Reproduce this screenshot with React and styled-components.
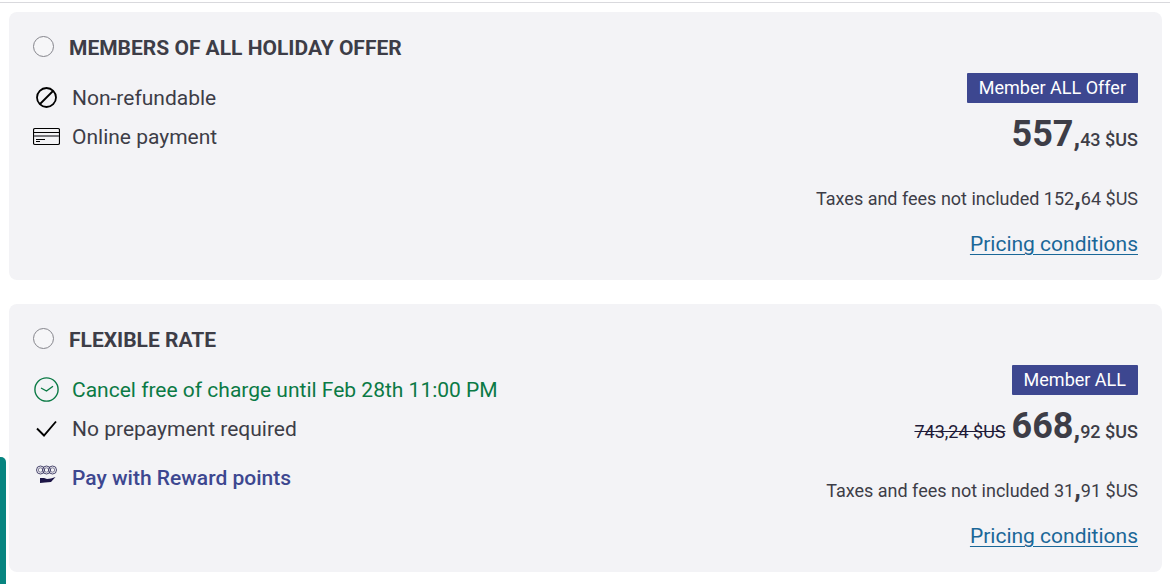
import React, {useState} from 'react'
import styled, {createGlobalStyle} from 'styled-components'


const offers = [
    {
        id: 'members',
        title: 'MEMBERS OF ALL HOLIDAY OFFER',
        features: [
            {icon: 'forbidden', text: 'Non-refundable'},
            {icon: 'card', text: 'Online payment'},
        ],
        badge: 'Member ALL Offer',
        price: ['557', '43'],
        taxes: ['152', '64'],
    },
    {
        id: 'flexible',
        title: 'FLEXIBLE RATE',
        features: [
            {icon: 'clock', text: 'Cancel free of charge until Feb 28th 11:00 PM', color: '#0b7a45'},
            {icon: 'check', text: 'No prepayment required'},
            {icon: 'reward', text: 'Pay with Reward points', color: '#3d4790', strong: true},
        ],
        badge: 'Member ALL',
        oldPrice: '743,24 $US',
        price: ['668', '92'],
        taxes: ['31', '91'],
    },
];

const icons = {
    forbidden: (
        <g fill="none" stroke="#000" strokeWidth="1.8">
            <circle cx="13.5" cy="13.5" r="9.5"/>
            <path d="M7 20L20 7"/>
        </g>
    ),
    card: (
        <g fill="none" stroke="#000">
            <rect x="0.5" y="5.5" width="26" height="16" rx="1.5" strokeWidth="1.2"/>
            <path d="M1 9.5H26"/>
            <path d="M1 13H26" stroke="#77777c" strokeWidth="2"/>
            <path d="M3 16.5H12M3 18.5H7"/>
        </g>
    ),
    clock: (
        <g fill="none" stroke="#0b7a45" strokeWidth="1.4">
            <circle cx="13.5" cy="13.5" r="11.6"/>
            <path d="M8 12L13.5 15L20 10.3"/>
        </g>
    ),
    check: <path d="M4 13.5L11 20.5L23 6.5" fill="none" stroke="#000" strokeWidth="1.9"/>,
    reward: (
        <g fill="none" stroke="#37335f" strokeWidth="0.9">
            <circle cx="7.5" cy="6" r="4"/>
            <circle cx="13.5" cy="6" r="4"/>
            <circle cx="19.5" cy="6" r="4"/>
            <circle cx="7.5" cy="6" r="2.2" strokeWidth="0.6"/>
            <circle cx="13.5" cy="6" r="2.2" strokeWidth="0.6"/>
            <circle cx="19.5" cy="6" r="2.2" strokeWidth="0.6"/>
            <path d="M7 14H11L14 15L18 14.5L22.5 13L18 18L12 18.5L7 19Z" fill="#1d1647" stroke="none"/>
        </g>
    ),
};

const Offer = ({offer, selected, onSelect}) => {
    const {id, title, features, badge, oldPrice, price, taxes} = offer;

    return (
        <Card>
            <Details>
                <Title htmlFor={id}>
                    <Radio type="radio" name="rate" id={id} checked={selected} onChange={() => onSelect(id)}/>
                    {title}
                </Title>
                <Features>
                    {features.map(({icon, text, color, strong}) => (
                        <Feature key={text} $color={color} $strong={strong}>
                            <Icon viewBox="0 0 27 27" aria-hidden="true">{icons[icon]}</Icon>
                            {text}
                        </Feature>
                    ))}
                </Features>
            </Details>
            <Pricing>
                <Badge>{badge}</Badge>
                <Price>
                    {oldPrice && <OldPrice>{oldPrice}</OldPrice>}
                    <Amount>{price[0]}</Amount><Comma>,</Comma>{price[1]} $US
                </Price>
                <Taxes>Taxes and fees not included {taxes[0]}<Comma>,</Comma>{taxes[1]} $US</Taxes>
                <Conditions href="#conditions">Pricing conditions</Conditions>
            </Pricing>
        </Card>
    )
};

const App = () => {
    const [selected, setSelected] = useState(null);

    return (
        <>
            <GlobalStyle/>
            <Page>
                {offers.map(offer => (
                    <Offer key={offer.id} offer={offer} selected={selected === offer.id} onSelect={setSelected}/>
                ))}
            </Page>
            <SideTab/>
        </>
    )
};

const GlobalStyle = createGlobalStyle`
    * {
        box-sizing: border-box;
    }
    body {
        margin: 0;
        background: #fff;
        color: #3d3d47;
        font-family: Roboto, sans-serif;
    }
`;

const Page = styled.main`
    display: flex;
    flex-direction: column;
    gap: 24px;
    margin-top: 2px;
    padding: 9px 8px 12px 9px;
    border-top: 1px solid #d9d9dd;
`;

const Card = styled.section`
    display: flex;
    justify-content: space-between;
    padding: 24px;
    border-radius: 8px;
    background: #f3f3f6;
`;

const Details = styled.div`
    display: flex;
    flex-direction: column;
    gap: 24px;
`;

const Title = styled.label`
    display: flex;
    align-items: center;
    gap: 15px;
    font-size: 21px;
    line-height: 24px;
    font-weight: 700;
`;

const Radio = styled.input`
    appearance: none;
    width: 21px;
    height: 21px;
    margin: 0 0 3px;
    border: 1px solid #85858c;
    border-radius: 50%;
    background: #f6f6f8;
    &:checked{border: 6px solid #3d4790}
`;

const Features = styled.ul`
    display: flex;
    flex-direction: column;
    gap: 11px;
    margin: 0;
    padding: 0;
    list-style: none;
`;

const Feature = styled.li`
    display: flex;
    align-items: flex-start;
    gap: 12px;
    margin-top: ${props => props.$strong ? '10px' : '0'};
    color: ${props => props.$color || 'inherit'};
    font-size: 21px;
    line-height: 28px;
    font-weight: ${props => props.$strong ? 500 : 400};
`;

const Icon = styled.svg`
    flex: none;
    width: 27px;
    height: 27px;
`;

const Pricing = styled.div`
    display: flex;
    flex-direction: column;
    align-items: flex-end;
    padding-top: 37px;
`;

const Badge = styled.span`
    padding: 0 12px;
    border-radius: 1px;
    background: #3d4790;
    color: #fff;
    font-size: 18px;
    line-height: 30px;
`;

const Price = styled.div`
    margin-top: 9px;
    font-size: 18px;
    line-height: 44px;
    font-weight: 500;
`;

const Amount = styled.strong`
    font-size: 36px;
    font-weight: 700;
`;

const OldPrice = styled.s`
    margin-right: 6px;
    color: #1f1b38;
    font-weight: 400;
`;

const Taxes = styled.div`
    margin-top: 12px;
    font-size: 18px;
    line-height: 44px;
`;

const Comma = styled.strong`
    font-size: 27px;
    font-weight: 700;
`;

const Conditions = styled.a`
    margin-top: 11px;
    color: #1a6798;
    font-size: 21px;
    line-height: 24px;
    text-underline-offset: 3px;
    text-decoration-thickness: 1px;
`;

const SideTab = styled.div`
    position: fixed;
    left: 0;
    bottom: 0;
    width: 6px;
    height: 127px;
    border-top-right-radius: 5px;
    background: #078580;
`;

export default App
